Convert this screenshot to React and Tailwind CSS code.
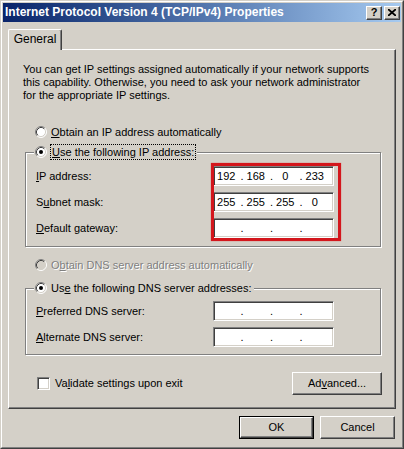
import React from 'react'

const FONT = "font-['Liberation_Sans',Arial,sans-serif]"

const raised =
    'border border-t-white border-l-white border-r-[#404040] border-b-[#404040] shadow-[inset_-1px_-1px_0_#808080,inset_1px_1px_0_#d4d0c8]'
const sunken =
    'border border-t-[#808080] border-l-[#808080] border-r-white border-b-white shadow-[inset_1px_1px_0_#404040,inset_-1px_-1px_0_#d4d0c8]'

const Radio = ({ checked, disabled }) => (
    <svg width="12" height="12" viewBox="0 0 12 12" className="shrink-0">
        <circle cx="6" cy="6" r="5" fill={disabled ? '#d4d0c8' : '#fff'} />
        <path d="M2.11 9.89 A5.5 5.5 0 0 1 9.89 2.11" fill="none" stroke="#808080" />
        <path d="M9.89 2.11 A5.5 5.5 0 0 1 2.11 9.89" fill="none" stroke="#fff" />
        <path d="M2.82 9.18 A4.5 4.5 0 0 1 9.18 2.82" fill="none" stroke="#404040" />
        <path d="M9.18 2.82 A4.5 4.5 0 0 1 2.82 9.18" fill="none" stroke="#d4d0c8" />
        {checked && <circle cx="6" cy="6" r="2" fill="#000" />}
    </svg>
)

const IpField = ({ parts }) => (
    <div className={`w-[121px] h-[20px] bg-white ${sunken} flex items-center pl-[1px]`}>
        {[0, 1, 2, 3].map(i => (
            <div key={i} className="flex w-[30px] items-center">
                <span className="flex-1 text-center pr-[3px]">{parts ? parts[i] : ''}</span>
                <span className="w-[4px]">{i < 3 ? '.' : ''}</span>
            </div>
        ))}
    </div>
)

const FieldRow = ({ label, parts }) => (
    <div className="flex items-center">
        <span className="w-[177px]">{label}</span>
        <IpField parts={parts} />
    </div>
)

const Button = ({ children, isDefault, className = '' }) => (
    <div
        className={`h-[23px] flex items-center justify-center ${
            isDefault ? 'border border-black' : ''
        } ${className}`}
    >
        <div className={`w-full h-full flex items-center justify-center ${raised}`}>{children}</div>
    </div>
)

const GroupBox = ({ legend, children, className = '' }) => (
    <div
        className={`relative ml-[16px] w-[356px] border border-[#808080] shadow-[1px_1px_0_#fff,inset_1px_1px_0_#fff] ${className}`}
    >
        <div className="absolute -top-[9px] left-[8px] h-[16px] flex items-center gap-[4px] bg-[#d4d0c8] pl-px pr-[2px]">
            {legend}
        </div>
        {children}
    </div>
)

export default function App() {
    return (
        <div
            className={`w-[404px] h-[449px] bg-[#d4d0c8] border border-t-[#d4d0c8] border-l-[#d4d0c8] border-r-[#404040] border-b-[#404040] ${FONT} text-[11px] leading-[13px] text-black`}
        >
            <div className="h-full border border-t-white border-l-white border-r-[#808080] border-b-[#808080] p-px flex flex-col">
                {/* Title bar */}
                <div className="h-[19px] shrink-0 bg-gradient-to-r from-[#0a246a] to-[#a6caf0] flex items-center pl-[2px] pr-[1px]">
                    <span className="text-white font-bold text-[12px]">
                        Internet Protocol Version 4 (TCP/IPv4) Properties
                    </span>
                    <div className="ml-auto flex gap-[2px]">
                        <div className={`w-[16px] h-[14px] bg-[#d4d0c8] ${raised} flex items-center justify-center font-bold text-[11px] leading-none`}>
                            ?
                        </div>
                        <div className={`w-[16px] h-[14px] bg-[#d4d0c8] ${raised} flex items-center justify-center`}>
                            <svg width="8" height="7" viewBox="0 0 8 7">
                                <path d="M0 0 L8 7 M8 0 L0 7" stroke="#000" strokeWidth="1.8" />
                            </svg>
                        </div>
                    </div>
                </div>

                <div className="pl-[5px] pr-[6px]">
                    {/* Tab */}
                    <div className="mt-[7px] relative z-10 w-[54px] h-[21px] bg-[#d4d0c8] border-t border-l border-white border-r border-r-[#404040] rounded-t-[2px] shadow-[inset_-1px_0_0_#808080] flex items-center justify-center pb-[2px] text-[12px]">
                        General
                    </div>

                    {/* Panel */}
                    <div className="-mt-px w-[388px] h-[360px] border border-t-white border-l-white border-r-[#404040] border-b-[#404040] shadow-[inset_-1px_-1px_0_#808080]">
                        <p className="pt-[13px] pl-[14px] pr-[10px]">
                            You can get IP settings assigned automatically if your network supports
                            <br />
                            this capability. Otherwise, you need to ask your network administrator
                            <br />
                            for the appropriate IP settings.
                        </p>

                        <div className="mt-[22px] ml-[26px] h-[16px] flex items-center gap-[4px]">
                            <Radio />
                            <span>
                                <u>O</u>btain an IP address automatically
                            </span>
                        </div>

                        <GroupBox
                            className="mt-[12px] pt-[13px] pb-[8px] pl-[10px]"
                            legend={
                                <>
                                    <Radio checked />
                                    <span className="outline-1 outline-dotted outline-black px-px h-[14px] flex items-center">
                                        <span>
                                            <u>U</u>se the following IP address:
                                        </span>
                                    </span>
                                </>
                            }
                        >
                            <div className="flex flex-col gap-[6px]">
                                <FieldRow label={<><u>I</u>P address:</>} parts={['192', '168', '0', '233']} />
                                <FieldRow label={<>S<u>u</u>bnet mask:</>} parts={['255', '255', '255', '0']} />
                                <FieldRow label={<><u>D</u>efault gateway:</>} />
                            </div>
                            {/* annotation */}
                            <div className="absolute left-[185px] top-[10px] w-[130px] h-[78px] border-[3px] border-[#d3161c] shadow-[0_0_1px_#e05050]" />
                        </GroupBox>

                        <div className="mt-[10px] ml-[26px] h-[16px] flex items-center gap-[4px] text-[#808080] [text-shadow:1px_1px_0_#fff]">
                            <Radio disabled />
                            <span>
                                O<u>b</u>tain DNS server address automatically
                            </span>
                        </div>

                        <GroupBox
                            className="mt-[15px] pt-[12px] pb-[7px] pl-[10px]"
                            legend={
                                <>
                                    <Radio checked />
                                    <span>
                                        Us<u>e</u> the following DNS server addresses:
                                    </span>
                                </>
                            }
                        >
                            <div className="flex flex-col gap-[6px]">
                                <FieldRow label={<><u>P</u>referred DNS server:</>} />
                                <FieldRow label={<><u>A</u>lternate DNS server:</>} />
                            </div>
                        </GroupBox>

                        <div className="mt-[17px] flex items-center pl-[28px] pr-[13px]">
                            <div className={`w-[13px] h-[13px] bg-white ${sunken}`} />
                            <span className="ml-[5px]">
                                Va<u>l</u>idate settings upon exit
                            </span>
                            <Button className="ml-auto w-[90px]">
                                <span>
                                    Ad<u>v</u>anced...
                                </span>
                            </Button>
                        </div>
                    </div>

                    {/* Dialog buttons */}
                    <div className="mt-[7px] flex justify-end gap-[6px]">
                        <Button isDefault className="w-[75px]">
                            OK
                        </Button>
                        <Button className="w-[75px]">Cancel</Button>
                    </div>
                </div>
            </div>
        </div>
    )
}
